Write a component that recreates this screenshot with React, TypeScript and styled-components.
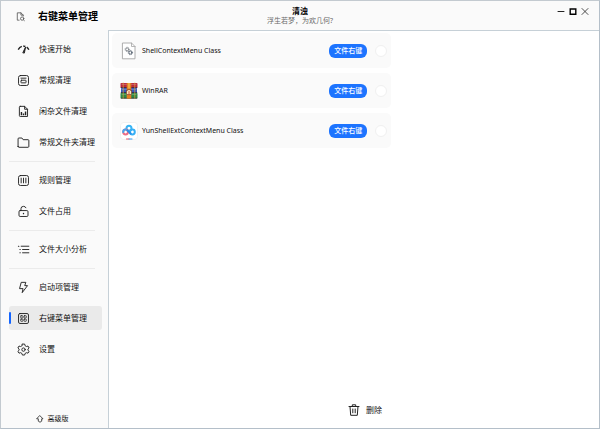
import React, { useState } from "react";
import styled, { createGlobalStyle } from "styled-components";

const GlobalStyle = createGlobalStyle`
  * { box-sizing: border-box; }
  body {
    margin: 0;
    background: #fafafa;
    color: #111;
    font-family: "Noto Sans", "Noto Sans CJK SC", sans-serif;
    font-size: 8px;
    line-height: 12px;
  }
  button { font: inherit; color: inherit; }
`;

const Window = styled.div`
  min-height: 100vh;
  display: grid;
  grid-template-columns: 107px minmax(0, 1fr);
  grid-template-rows: 29px minmax(0, 1fr);
  border: 1px solid #c3cad0;
  border-right-color: #b4bfc9;
  border-bottom-color: #b4bfc9;
  background: #fafafa;
`;

const TitleBar = styled.header`
  grid-column: 1 / -1;
  display: grid;
  grid-template-columns: 1fr auto 1fr;
`;

const Heading = styled.div`
  display: flex;
  align-items: center;
  gap: 12px;
  padding: 1px 0 0 14px;
  h1 {
    margin: 0;
    font-size: 10px;
    line-height: 16px;
    font-weight: 700;
    color: #000;
    white-space: nowrap;
  }
`;

const AppTitle = styled.div`
  text-align: center;
  padding-top: 5px;
  line-height: 10px;
  font-weight: 700;
  color: #000;
`;

const Motto = styled.div`
  font-size: 7px;
  font-weight: 400;
  color: #6a6a6a;
`;

const WindowButtons = styled.div`
  display: flex;
  justify-content: flex-end;
  align-items: flex-start;
  gap: 2px;
  padding: 5px 9px 0 0;
`;

const IconButton = styled.button`
  display: flex;
  padding: 0;
  border: 0;
  background: none;
`;

const Sidebar = styled.nav`
  display: flex;
  flex-direction: column;
  padding: 7px 6px 3px 8px;
`;

const NavItem = styled.button<{ $active: boolean }>`
  position: relative;
  display: flex;
  align-items: center;
  gap: 8px;
  flex: none;
  height: 24px;
  margin: 0 0 7px;
  padding: 0 0 0 7px;
  border: 0;
  border-radius: 3px;
  background: ${(p) => (p.$active ? "#eaeaea" : "transparent")};
  text-align: left;
  white-space: nowrap;
  &::before {
    content: "";
    position: absolute;
    left: 0;
    top: 6px;
    width: 2px;
    height: 12px;
    border-radius: 1px;
    background: ${(p) => (p.$active ? "#1465ff" : "transparent")};
  }
`;

const Divider = styled.hr`
  flex: none;
  width: 86px;
  height: 1px;
  margin: 0 0 6px;
  border: 0;
  background: #ebebeb;
`;

const Edition = styled.a`
  display: flex;
  align-items: center;
  justify-content: center;
  gap: 4px;
  margin-top: auto;
  padding-right: 7px;
  font-size: 7px;
  color: #111;
  text-decoration: none;
`;

const Content = styled.main`
  display: flex;
  flex-direction: column;
  justify-content: space-between;
  border: 1px solid #c6d0d7;
  border-width: 1px 0 0 1px;
  background: #fff;
`;

const EntryList = styled.ul`
  display: flex;
  flex-direction: column;
  gap: 5px;
  width: 57%;
  min-width: 260px;
  margin: 2px 0 0 3px;
  padding: 0;
  list-style: none;
`;

const Entry = styled.li`
  display: flex;
  align-items: center;
  height: 35px;
  padding: 0 4px 0 8px;
  border-radius: 5px;
  background: #fafafa;
`;

const EntryName = styled.span`
  flex: 1;
  padding-left: 4px;
  font-family: "Noto Sans", sans-serif;
  font-size: 7px;
`;

const Tag = styled.span`
  padding: 1px 5px;
  margin-right: 8px;
  border-radius: 6px;
  background: #1d74ff;
  color: #fff;
  font-size: 7px;
  font-weight: 500;
`;

const Check = styled.input`
  appearance: none;
  width: 12px;
  height: 12px;
  margin: 0;
  border: 1px solid #f0f0f0;
  border-radius: 50%;
  background: #fff;
  &:checked { background: #1d74ff; }
`;

const Footer = styled.footer`
  display: flex;
  justify-content: center;
  padding: 0 0 11px 21px;
`;

const DeleteButton = styled(IconButton)`
  align-items: center;
  gap: 5px;
`;

const Glyph = styled.svg`
  display: block;
  flex: none;
  fill: none;
  stroke: #222;
  stroke-linecap: round;
  stroke-linejoin: round;
`;

const icons: Record<string, React.ReactNode> = {
  gauge: (
    <>
      <path d="M2.4 8.2C3.4 6.2 4.6 5.2 6.2 4.7M7.6 4.4Q9 4.3 10 4.8M11.4 5.4Q12.8 6.3 13.7 8.2" strokeWidth="1.5" strokeLinecap="butt" />
      <path d="M7.4 11.2L10.2 5.4L9 11.4Z" fill="#111" strokeWidth="1" />
    </>
  ),
  card: (
    <>
      <rect x="2.7" y="2.7" width="10.6" height="10.6" rx="2" />
      <path d="M5.3 5.5H10.7" />
      <rect x="5.3" y="7.7" width="5.4" height="2.8" rx=".6" />
    </>
  ),
  report: (
    <>
      <path d="M4.5 2.5H9.2L12.3 5.6V13.3H4.5Q3.6 13.3 3.6 12.4V3.4Q3.6 2.5 4.5 2.5ZM9.2 2.5V5.6H12.3" />
      <path d="M5.8 12V8.5M8 12V10M10.2 12V8" strokeWidth="1.5" strokeLinecap="butt" />
    </>
  ),
  folder: <path d="M2.2 12.2V4.1Q2.2 3.2 3.1 3.2H6.3L7.6 5H12.8Q13.7 5 13.7 5.9V12.2Q13.7 13.1 12.8 13.1H3.1Q2.2 13.1 2.2 12.2Z" />,
  bars: (
    <>
      <rect x="2.7" y="2.7" width="10.6" height="10.6" rx="2" />
      <path d="M5.5 5.5V10.5M8 5.5V10.5M10.5 5.5V10.5" />
    </>
  ),
  lock: (
    <>
      <rect x="3.2" y="7" width="9.6" height="6.3" rx="1.2" />
      <path d="M5.3 7V5Q5.3 2.5 8 2.5Q10 2.5 10.6 4" />
      <path d="M8 9.9V10.3" strokeWidth="1.4" />
    </>
  ),
  list: (
    <>
      <path d="M5.5 4.5H13.7M7 8H13.7M7 11.5H13.7" />
      <path d="M2.6 4.5H3M4.2 8H4.5M4.2 11.5H4.5" strokeWidth="1.2" />
    </>
  ),
  bolt: <path d="M6 2.5H10.5L9.3 6H12.3L6.6 13.5L7.5 9.2H4.2Z" />,
  grid: (
    <>
      <rect x="2.7" y="2.7" width="10.6" height="10.6" rx="1.5" />
      <rect x="5" y="5" width="2.4" height="2.4" rx=".5" strokeWidth=".8" />
      <rect x="8.6" y="5" width="2.4" height="2.4" rx=".5" strokeWidth=".8" />
      <rect x="5" y="8.6" width="2.4" height="2.4" rx=".5" strokeWidth=".8" />
      <rect x="8.6" y="8.6" width="2.4" height="2.4" rx=".5" strokeWidth=".8" />
    </>
  ),
  gear: (
    <>
      <path d="M6.8 2.2H9.2L9.7 4L11.1 4.8L12.8 4.3L14 6.4L12.7 7.6V8.8L14 10L12.8 11.9L11.1 11.4L9.7 12.2L9.2 13.9H6.8L6.3 12.2L4.9 11.4L3.2 11.9L2 10L3.3 8.8V7.6L2 6.4L3.2 4.3L4.9 4.8L6.3 4Z" />
      <circle cx="8" cy="8.1" r="1.8" />
    </>
  ),
};

const NavIcon = ({ name }: { name: string }) => (
  <Glyph width="15" height="15" viewBox="0 0 16 16" aria-hidden="true">
    {icons[name]}
  </Glyph>
);

const groups = [
  [
    { icon: "gauge", label: "快速开始" },
    { icon: "card", label: "常规清理" },
    { icon: "report", label: "闲杂文件清理" },
    { icon: "folder", label: "常规文件夹清理" },
  ],
  [
    { icon: "bars", label: "规则管理" },
    { icon: "lock", label: "文件占用" },
  ],
  [{ icon: "list", label: "文件大小分析" }],
  [
    { icon: "bolt", label: "启动项管理" },
    { icon: "grid", label: "右键菜单管理" },
    { icon: "gear", label: "设置" },
  ],
];

const ShellIcon = () => (
  <Glyph width="18" height="18" viewBox="0 0 18 18" aria-hidden="true">
    <path d="M2.8 1H11.5L15 4.5V16.8H2.8Z" fill="#fff" stroke="#a5a5a5" strokeWidth=".9" />
    <path d="M11.5 1V4.5H15" stroke="#a5a5a5" strokeWidth=".8" />
    <circle cx="7.2" cy="7.4" r="1.5" stroke="#84898e" strokeWidth="1" />
    <circle cx="7.2" cy="7.4" r="2.2" stroke="#84898e" strokeWidth=".8" strokeDasharray=".9 .83" strokeLinecap="butt" />
    <circle cx="10.4" cy="10.6" r="1.5" stroke="#596572" strokeWidth="1" />
    <circle cx="10.4" cy="10.6" r="2.2" stroke="#596572" strokeWidth=".8" strokeDasharray=".9 .83" strokeLinecap="butt" />
  </Glyph>
);

const RarIcon = () => (
  <Glyph width="18" height="18" viewBox="0 0 18 18" aria-hidden="true">
    <g stroke="none">
      <rect x=".5" y="1" width="17" height="5" rx=".8" fill="#b92a3d" />
      <rect x="1" y="6" width="16" height="5" rx=".6" fill="#3757b8" />
      <rect x=".5" y="11" width="17" height="5.5" rx=".8" fill="#2e8845" />
      <path d="M.8 5.2H17.2V6H.8ZM.8 10.3H17.2V11H.8ZM.8 15.7H17.2V16.6H.8Z" fill="#352536" />
      <path d="M2 2.4H16M2 7.4H16M2 12.4H16" stroke="#ffffff" strokeOpacity=".3" strokeWidth=".8" />
      <path d="M3.2 1V16.5M14.8 1V16.5" stroke="#e0a13a" strokeWidth=".7" />
      <rect x="6.7" y="1" width="4.6" height="15.7" fill="#e37e22" />
      <path d="M9 1.5V6" stroke="#f6ca55" strokeWidth="1.2" />
      <rect x="6.2" y="7.4" width="5.6" height="5.6" rx="1.5" fill="#74392a" />
      <path d="M6.8 12.3V9.2Q9 6.8 11.2 9.2V12.3Z" fill="#f8e7bd" />
      <path d="M9 9.5V13" stroke="#d65331" strokeWidth="1" />
    </g>
  </Glyph>
);

const CloudIcon = () => (
  <Glyph width="18" height="18" viewBox="0 0 18 18" aria-hidden="true">
    <rect x=".5" y=".5" width="17" height="17" rx="3" fill="#fff" stroke="#f1f1f1" />
    <circle cx="9" cy="6.2" r="2.5" stroke="#36b4f5" strokeWidth="2" />
    <circle cx="5.6" cy="10" r="2.4" stroke="#ed6b85" strokeWidth="2" />
    <circle cx="12.4" cy="10" r="2.4" stroke="#36aff5" strokeWidth="2" />
    <path d="M7.4 8.2L10.6 11.6" stroke="#2b8ee9" strokeWidth="2" />
    <path d="M3.2 10Q3.4 7.6 5.6 7.6" stroke="#45a8f0" strokeWidth="2" />
    <path d="M6.5 17H9" stroke="#f05065" />
    <path d="M9 17H12" stroke="#329bef" />
  </Glyph>
);

const entries = [
  { name: "ShellContextMenu Class", Icon: ShellIcon },
  { name: "WinRAR", Icon: RarIcon },
  { name: "YunShellExtContextMenu Class", Icon: CloudIcon },
];

export default function App() {
  const [active, setActive] = useState("右键菜单管理");
  return (
    <>
      <GlobalStyle />
      <Window lang="zh-CN">
        <TitleBar>
          <Heading>
            <Glyph width="11" height="11" viewBox="0 0 12 12" aria-hidden="true">
              <path d="M4.5 10H2.5V2H6.5L9 4.5V5.5M6.5 2V4.5H9" stroke="#555" strokeWidth=".9" />
              <circle cx="7.8" cy="8.3" r="1.8" stroke="#555" strokeWidth=".9" />
              <path d="M9.2 9.6L10.2 10.5" stroke="#555" strokeWidth=".9" />
            </Glyph>
            <h1>右键菜单管理</h1>
          </Heading>
          <AppTitle>
            清浊
            <Motto>浮生若梦，为欢几何?</Motto>
          </AppTitle>
          <WindowButtons>
            <IconButton aria-label="最小化">
              <Glyph width="10" height="10" viewBox="0 0 10 10"><path d="M2 5.5H8" /></Glyph>
            </IconButton>
            <IconButton aria-label="最大化">
              <Glyph width="10" height="10" viewBox="0 0 10 10">
                <path d="M2.2 3V8.3H7.8V3Z" stroke="#000" strokeWidth="1.4" strokeLinejoin="miter" />
              </Glyph>
            </IconButton>
            <IconButton aria-label="关闭">
              <Glyph width="10" height="10" viewBox="0 0 10 10"><path d="M2 2.5L8 8.5M8 2.5L2 8.5" strokeWidth=".8" /></Glyph>
            </IconButton>
          </WindowButtons>
        </TitleBar>
        <Sidebar>
          {groups.map((group, i) => (
            <React.Fragment key={i}>
              {i > 0 && <Divider />}
              {group.map(({ icon, label }) => (
                <NavItem key={label} $active={label === active} onClick={() => setActive(label)}>
                  <NavIcon name={icon} />
                  {label}
                </NavItem>
              ))}
            </React.Fragment>
          ))}
          <Edition href="#">
            <Glyph width="8" height="8" viewBox="0 0 8 8" aria-hidden="true">
              <path d="M4 .8L7 3.8H5.7V6.2L4 7.2L2.3 6.2V3.8H1Z" strokeWidth=".8" />
            </Glyph>
            高级版
          </Edition>
        </Sidebar>
        <Content>
          <EntryList>
            {entries.map(({ name, Icon }) => (
              <Entry key={name}>
                <Icon />
                <EntryName>{name}</EntryName>
                <Tag>文件右键</Tag>
                <Check type="checkbox" aria-label={name} />
              </Entry>
            ))}
          </EntryList>
          <Footer>
            <DeleteButton>
              <Glyph width="14" height="14" viewBox="0 0 14 14" aria-hidden="true">
                <path d="M2 3.5H12M5.3 3V1.8H8.7V3M3 3.5L3.7 12.3H10.3L11 3.5M5.8 6V9.8M8.2 6V9.8" />
              </Glyph>
              删除
            </DeleteButton>
          </Footer>
        </Content>
      </Window>
    </>
  );
}
